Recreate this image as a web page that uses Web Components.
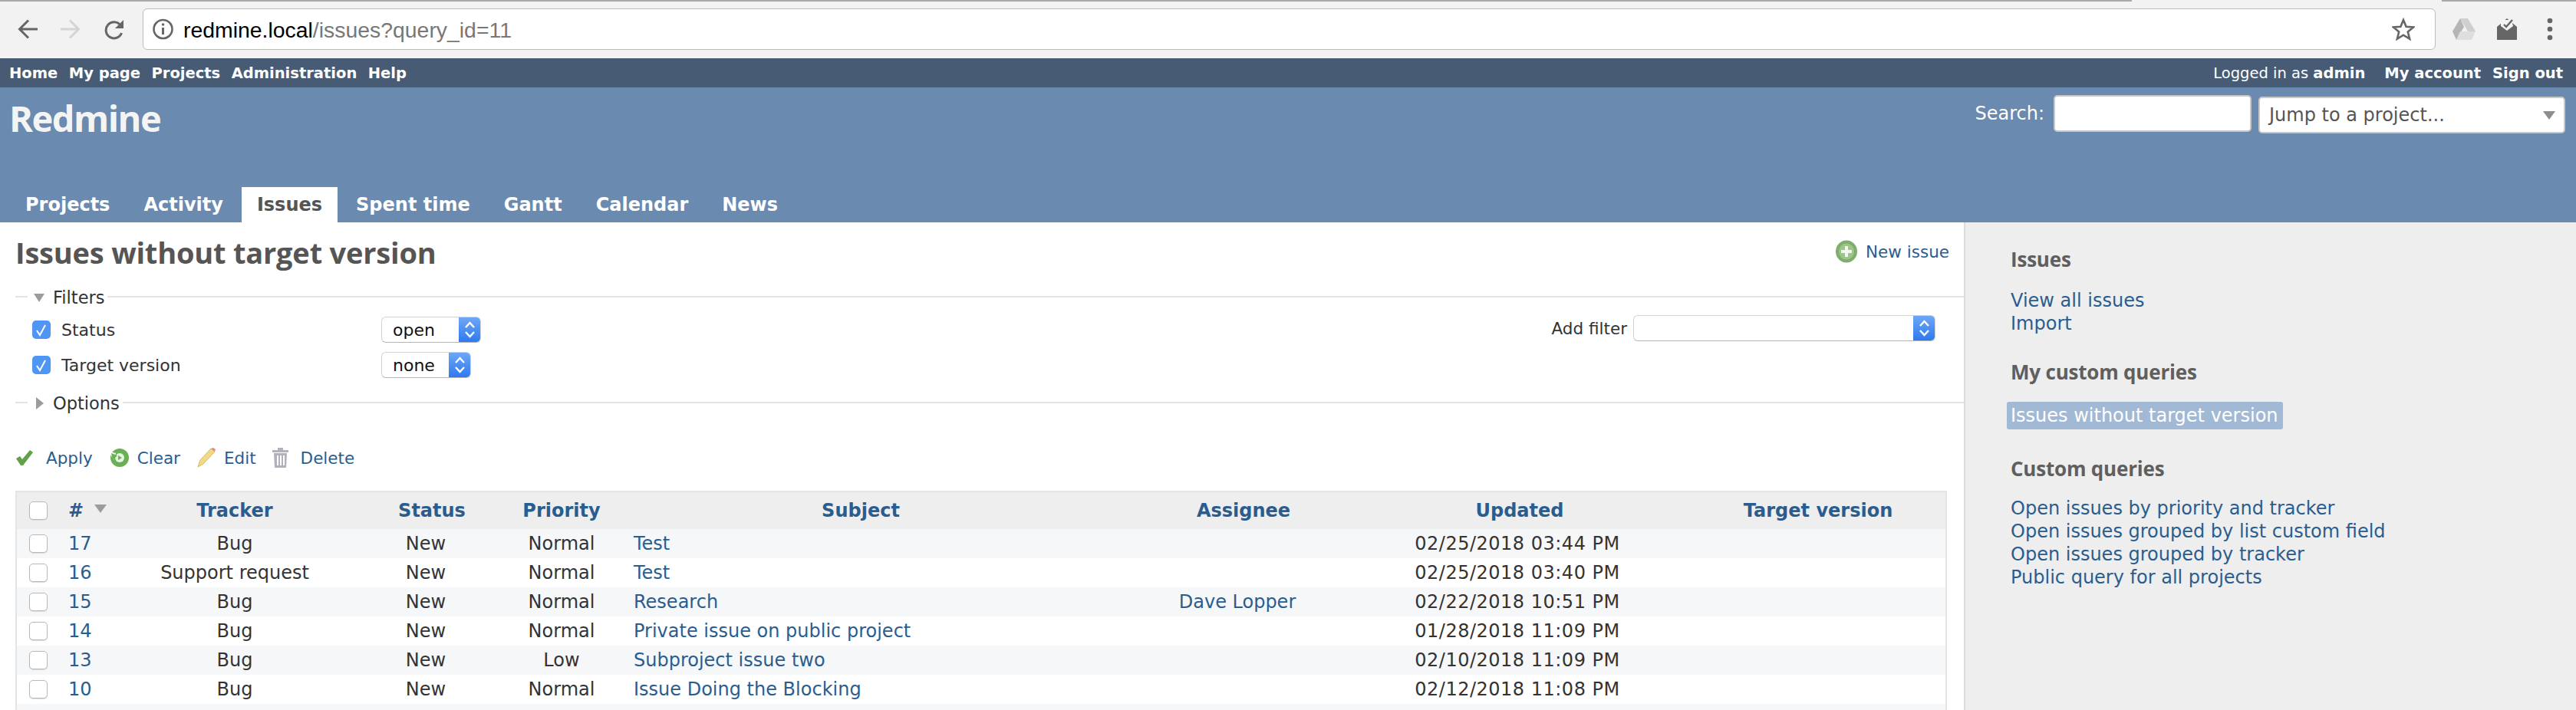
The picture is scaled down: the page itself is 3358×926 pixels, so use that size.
<!DOCTYPE html>
<html>
<head>
<meta charset="utf-8">
<title>Issues without target version</title>
<style>
  html, body { margin: 0; height: 926px; overflow: hidden; background: #fff; }
  body { font-family: "DejaVu Sans", Verdana, sans-serif; font-size: 24px; color: #333; }
  .app { display: flex; flex-direction: column; height: 926px; overflow: hidden; }
  .content { display: flex; flex: 1; min-height: 0; }
</style>
</head>
<body>
<div class="app">
  <browser-bar></browser-bar>
  <top-menu></top-menu>
  <site-header></site-header>
  <div class="content">
    <issues-main></issues-main>
    <issues-sidebar></issues-sidebar>
  </div>
</div>

<script>
const LINK = "#2a5d8f";

function defineElement(name, html) {
  const template = document.createElement("template");
  template.innerHTML = html;
  customElements.define(name, class extends HTMLElement {
    connectedCallback() {
      if (this.shadowRoot) return;
      this.attachShadow({ mode: "open" });
      this.shadowRoot.appendChild(template.content.cloneNode(true));
    }
  });
}

defineElement("browser-bar", `
  <style>
    :host { display: flex; align-items: center; height: 76px; box-sizing: border-box; background: #f2f2f2; padding: 11px 0 11px 23px; position: relative; }
    .strip { position: absolute; left: 0; right: 0; top: 0; height: 2px; display: flex; }
    .strip i { display: block; height: 2px; background: #a9a9a9; }
    .nav { display: flex; gap: 30px; align-items: center; width: 163px; }
    .nav svg { display: block; }
    .omni { flex: none; width: 2989px; height: 54px; box-sizing: border-box; border: 1px solid #bdbdbd; border-radius: 6px; background: #fff; display: flex; align-items: center; padding: 0 13px 0 12px; font: 28.400px "Liberation Sans", Arial, sans-serif; color: #777; }
    .omni b { font-weight: normal; color: #000; }
    .omni span { position: relative; top: 1px; }
    .omni svg { margin-right: 13px; }
    .star { margin-left: auto; }
    .ext { display: flex; align-items: center; margin-left: 21px; }
  </style>
  <div class="strip"><i style="width:2779px"></i><i style="width:404px;background:none"></i><i style="flex:1"></i></div>
  <div class="nav">
    <svg width="26" height="26" viewBox="0 0 26 26" fill="none" stroke="#666" stroke-width="3"><path d="M26 13H3M14 1.500L2.500 13 14 24.500"/></svg>
    <svg width="26" height="26" viewBox="0 0 26 26" fill="none" stroke="#d4d4d4" stroke-width="3"><path d="M0 13h23M12 1.500L23.500 13 12 24.500"/></svg>
    <svg width="27" height="27" viewBox="0 0 27 27" fill="none" stroke="#666" stroke-width="3"><path d="M23.500 18a10.500 10.500 0 1 1-1.500-10"/><path d="M26 1v11H15" fill="#666" stroke="none"/></svg>
  </div>
  <div class="omni">
    <svg width="27" height="28" viewBox="0 0 27 28" fill="none"><circle cx="13.500" cy="14" r="12" stroke="#666" stroke-width="2.600"/><path d="M13.500 12v9" stroke="#666" stroke-width="3"/><circle cx="13.500" cy="8" r="1.800" fill="#666"/></svg>
    <span><b>redmine.local</b>/issues?query_id=11</span>
    <svg class="star" width="30" height="30" viewBox="0 0 30 30" fill="none" stroke="#666" stroke-width="2.600"><path d="M15 3l3.600 8.800 9.400.7-7.200 6 2.300 9.200-8.100-5-8.100 5 2.300-9.200-7.200-6 9.400-.7z"/></svg>
  </div>
  <div class="ext">
    <svg style="margin-right:26px" width="32" height="30" viewBox="0 0 32 30"><path d="M11 1h10l10 17H21z" fill="#cfcfcf"/><path d="M11 1L1 18l5 11 10-17z" fill="#b5b5b5"/><path d="M6 29h20l5-11H11z" fill="#dedede"/></svg>
    <svg style="margin-right:38px" width="28" height="30" viewBox="0 0 28 30"><path d="M1 12L14 1l13 11v17H1z" fill="#666"/><path d="M6 3h14l2 8-8 6-8-6z" fill="#f2f2f2"/><path d="M10 9l3 3 8-9" fill="none" stroke="#666" stroke-width="2.400"/></svg>
    <svg width="8" height="30" viewBox="0 0 8 30" fill="#666"><circle cx="4" cy="4" r="3.300"/><circle cx="4" cy="15" r="3.300"/><circle cx="4" cy="26" r="3.300"/></svg>
  </div>
`);

defineElement("top-menu", `
  <style>
    :host { display: flex; justify-content: space-between; align-items: center; height: 38px; box-sizing: border-box; background: #475b74; color: #fff; padding: 0 17px 0 12px; font: bold 19.500px "DejaVu Sans", Verdana, sans-serif; }
    nav { display: flex; gap: 14.500px; }
    .right { display: flex; align-items: center; gap: 15px; }
    .who { font-weight: normal; margin-right: 10px; }
    b { font-weight: bold; }
  </style>
  <nav><span>Home</span><span>My page</span><span>Projects</span><span>Administration</span><span>Help</span></nav>
  <div class="right"><span class="who">Logged in as <b>admin</b></span><span>My account</span><span>Sign out</span></div>
`);

defineElement("site-header", `
  <style>
    :host { display: block; height: 176px; box-sizing: border-box; background: #6a8ab0; color: #fff; position: relative; }
    .row { display: flex; justify-content: space-between; height: 130px; box-sizing: border-box; padding: 10px 14px 0 12px; }
    h1 { margin: 2px 0 0; font: 700 47px/1.2 "Open Sans", sans-serif; letter-spacing: -1.500px; color: #f4f4f4; }
    .quick { display: flex; align-items: flex-start; padding-top: 0; }
    label { line-height: 48px; margin-right: 12px; }
    .search { width: 258px; height: 48px; box-sizing: border-box; background: #fff; border: 2px solid #c8c8c8; border-radius: 5px; margin-right: 9px; }
    .jump { width: 400px; height: 48px; margin-top: 2px; box-sizing: border-box; background: #fff; border: 2px solid #c8c8c8; border-radius: 5px; color: #555; line-height: 44px; padding-left: 12px; position: relative; }
    .jump i { position: absolute; right: 11px; top: 17px; width: 0; height: 0; border: 8px solid transparent; border-top: 11px solid #8d8d8d; border-bottom: 0; }
    nav { display: flex; gap: 4px; padding-left: 13px; height: 46px; }
    nav span { padding: 0 20px; font-weight: bold; line-height: 46px; }
    nav .on { background: #fff; color: #555; }
  </style>
  <div class="row">
    <h1>Redmine</h1>
    <div class="quick">
      <label>Search:</label>
      <div class="search"></div>
      <div class="jump">Jump to a project...<i></i></div>
    </div>
  </div>
  <nav><span>Projects</span><span>Activity</span><span class="on">Issues</span><span>Spent time</span><span>Gantt</span><span>Calendar</span><span>News</span></nav>
`);

defineElement("aqua-select", `
  <style>
    :host { display: inline-flex; height: 34px; box-sizing: border-box; border: 1px solid #d2d2d2; border-bottom: 1px solid #b5b5b5; border-radius: 6px; background: #fff; color: #111; align-items: center; overflow: hidden; }
    .text { flex: 1; padding-left: 14px; font-size: 22px; }
    .btn { flex: none; width: 29px; align-self: stretch; margin: -1px; background: linear-gradient(#6fa8f5, #2d78f0); display: flex; align-items: center; justify-content: center; }
  </style>
  <span class="text"><slot></slot></span>
  <span class="btn"><svg width="15" height="26" viewBox="0 0 15 26" fill="none" stroke="#fff" stroke-width="2.400"><path d="M2 10l5.500-6 5.500 6M2 16l5.500 6 5.500-6"/></svg></span>
`);

defineElement("blue-check", `
  <style>
    :host { display: inline-block; flex: none; width: 24px; height: 24px; box-sizing: border-box; border-radius: 5px; background: #4f95f4; }
    svg { display: block; }
  </style>
  <svg width="24" height="24" viewBox="0 0 24 24" fill="none" stroke="#fff" stroke-width="2"><path d="M6 13l4 6 7-13"/></svg>
`);

defineElement("filter-legend", `
  <style>
    :host { display: flex; align-items: center; height: 30px; color: #333; }
    .l1 { width: 16px; height: 2px; background: #e4e4e4; margin-left: 20px; }
    .label { display: flex; align-items: center; padding: 2px 4px 0 7px; }
    .arrow { width: 26px; display: flex; }
    .l2 { flex: 1; height: 2px; background: #e4e4e4; }
    span.txt { font-size: 22.500px; }
  </style>
  <i class="l1"></i>
  <span class="label"><span class="arrow"><slot name="arrow"></slot></span><span class="txt"><slot></slot></span></span>
  <i class="l2"></i>
`);

defineElement("query-filters", `
  <style>
    :host { display: block; font-size: 22px; }
    .filters { display: flex; justify-content: space-between; height: 108px; }
    .rows { padding: 11px 0 0 42px; display: flex; flex-direction: column; gap: 12px; }
    .row { display: flex; align-items: center; height: 34px; }
    .row label { width: 431px; padding-left: 14px; box-sizing: border-box; }
    .add { display: flex; align-items: center; gap: 8px; height: 34px; margin: 9px 37px 0 0; font-size: 21.500px; }
  </style>
  <filter-legend><svg slot="arrow" width="16" height="14" viewBox="0 0 16 14"><path d="M1 2h14l-7 11z" fill="#9c9c9c"/></svg>Filters</filter-legend>
  <div class="filters">
    <div class="rows">
      <div class="row"><blue-check></blue-check><label>Status</label><aqua-select style="width:130px">open</aqua-select></div>
      <div class="row"><blue-check></blue-check><label>Target version</label><aqua-select style="width:117px">none</aqua-select></div>
    </div>
    <div class="add"><span>Add filter</span><aqua-select style="width:394px"></aqua-select></div>
  </div>
  <filter-legend><svg slot="arrow" width="16" height="18" viewBox="0 0 16 18"><path d="M4 1l10 8-10 8z" fill="#9c9c9c"/></svg>Options</filter-legend>
`);

defineElement("query-actions", `
  <style>
    :host { display: flex; align-items: center; height: 30px; padding-left: 20px; color: ${LINK}; font-size: 21.500px; }
    span { display: flex; align-items: center; }
    svg { flex: none; }
  </style>
  <span style="margin-right:21px"><svg width="24" height="22" viewBox="0 0 24 22" style="margin-right:16px"><path d="M1 12l5-3 3 4L19 1l4 3L10 21H7z" fill="#62a04c"/></svg>Apply</span>
  <span style="margin-right:20px"><svg width="26" height="28" viewBox="0 0 26 28" style="margin-right:11px" fill="none"><circle cx="14" cy="14" r="12" fill="#6aae55"/><circle cx="14" cy="14" r="6" fill="#e9f3e3"/><path d="M0 6l9 2-3 9z" fill="#fff"/><path d="M3 8l8 3-6 6z" fill="#6aae55"/><path d="M12 11l5 3-5 3z" fill="#6aae55"/></svg>Clear</span>
  <span style="margin-right:20px"><svg width="27" height="28" viewBox="0 0 27 28" style="margin-right:10px"><path d="M3 26l3-9L20 2l5 4L10 22z" fill="#f1d98a" stroke="#d8b85c"/><path d="M20 2l5 4 1-3-3-2z" fill="#e58a8a"/></svg>Edit</span>
  <span><svg width="23" height="28" viewBox="0 0 23 28" style="margin-right:15px" fill="#b0b0be"><path d="M8 1h7v3h7v3H1V4h7z"/><path d="M3 8h17l-1 19H4zM7 11v13h2V11zM11 11v13h2V11zM15 11v13h2V11z" fill-rule="evenodd"/></svg>Delete</span>
`);

const issues = [
  [17, "Bug", "Normal", "Test", "", "02/25/2018 03:44 PM"],
  [16, "Support request", "Normal", "Test", "", "02/25/2018 03:40 PM"],
  [15, "Bug", "Normal", "Research", "Dave Lopper", "02/22/2018 10:51 PM"],
  [14, "Bug", "Normal", "Private issue on public project", "", "01/28/2018 11:09 PM"],
  [13, "Bug", "Low", "Subproject issue two", "", "02/10/2018 11:09 PM"],
  [10, "Bug", "Normal", "Issue Doing the Blocking", "", "02/12/2018 11:08 PM"]
];

const issueTableTemplate = document.createElement("template");
issueTableTemplate.innerHTML = `
  <style>
    :host { display: block; margin-left: 20px; width: 2518px; border-left: 2px solid #e4e4e4; border-top: 2px solid #e4e4e4; border-right: 2px solid #e4e4e4; box-sizing: border-box; }
    table { border-collapse: collapse; table-layout: fixed; width: 100%; font-size: 24px; }
    th { height: 48px; padding: 0; background: #eee; color: ${LINK}; font-weight: bold; }
    td { height: 38px; padding: 0; text-align: center; white-space: nowrap; }
    tbody tr:nth-child(odd) td { background: #f6f7f8; }
    .box { display: block; width: 24px; height: 24px; box-sizing: border-box; margin-left: 16px; background: #fff; border: 1px solid #b8b8b8; border-radius: 5px; box-shadow: 0 1px 1px #ddd; }
    .id { text-align: left; padding-left: 19px; }
    .id, .subject, .assignee { color: ${LINK}; }
    td.subject { text-align: left; padding-left: 36px; }
    th.subject { padding-right: 30px; }
    td.status, td.assignee { padding-right: 16px; }
    td.date { padding-right: 6px; letter-spacing: .5px; }
    .sort { display: inline-block; width: 0; height: 0; border: 8px solid transparent; border-top: 11px solid #9c9c9c; border-bottom: 0; margin-left: 14px; vertical-align: 5px; }
    tr.cut td { height: 8px; }
  </style>
  <table>
    <colgroup>
      <col style="width:48px"><col style="width:90px"><col style="width:292px"><col style="width:222px">
      <col style="width:116px"><col style="width:694px"><col style="width:274px"><col style="width:446px"><col>
    </colgroup>
    <thead><tr>
      <th><span class="box"></span></th>
      <th class="id">#<i class="sort"></i></th>
      <th>Tracker</th><th>Status</th><th>Priority</th><th class="subject">Subject</th><th>Assignee</th><th>Updated</th><th>Target version</th>
    </tr></thead>
    <tbody></tbody>
  </table>
`;

class IssueTable extends HTMLElement {
  connectedCallback() {
    this.attachShadow({ mode: "open" });
    this.shadowRoot.appendChild(issueTableTemplate.content.cloneNode(true));
    this.$body = this.shadowRoot.querySelector("tbody");
    this.render();
  }

  render() {
    this.$body.innerHTML = issues.map(i => `
      <tr>
        <td><span class="box"></span></td>
        <td class="id">${i[0]}</td>
        <td>${i[1]}</td><td class="status">New</td><td>${i[2]}</td>
        <td class="subject">${i[3]}</td>
        <td class="assignee">${i[4]}</td>
        <td class="date">${i[5]}</td><td></td>
      </tr>`).join("") + `<tr class="cut"><td colspan="9"></td></tr>`;
  }
}
customElements.define("issue-table", IssueTable);

defineElement("issues-main", `
  <style>
    :host { display: block; flex: none; width: 2560px; box-sizing: border-box; overflow: hidden; }
    .head { display: flex; justify-content: space-between; align-items: center; height: 82px; padding: 0 19px 0 20px; }
    h2 { margin: -4px 0 0; font: 700 38px "Open Sans", sans-serif; letter-spacing: -0.200px; color: #555; }
    .new { display: flex; align-items: center; color: ${LINK}; font-size: 21.500px; margin-top: -6px; }
    .new svg { margin-right: 11px; }
    query-filters { margin-bottom: 42px; }
    query-actions { margin-bottom: 28px; }
  </style>
  <div class="head">
    <h2>Issues without target version</h2>
    <span class="new"><svg width="28" height="30" viewBox="0 0 28 30"><ellipse cx="14" cy="15" rx="14" ry="14.500" fill="#7fae6c"/><ellipse cx="14" cy="15" rx="10" ry="10.500" fill="#9cc48b"/><path d="M12 8h4v5h5v4h-5v5h-4v-5H7v-4h5z" fill="#f2f7ef"/></svg>New issue</span>
  </div>
  <query-filters></query-filters>
  <query-actions></query-actions>
  <issue-table></issue-table>
`);

defineElement("issues-sidebar", `
  <style>
    :host { display: block; flex: 1; background: #eee; border-left: 2px solid #dcdcdc; box-sizing: border-box; padding: 30px 0 0 59px; font-size: 24px; color: ${LINK}; }
    h3 { margin: 0 0 21px; font: 700 26px/36px "Open Sans", sans-serif; letter-spacing: -0.200px; color: #5f5f5f; }
    .links { margin-bottom: 30px; }
    .links div { height: 30px; line-height: 30px; }
    .links .sel { width: fit-content; margin-left: -5px; padding: 0 6px 0 5px; height: 36px; line-height: 36px; background: #a2b9d5; color: #fff; border-radius: 3px; }
  </style>
  <h3>Issues</h3>
  <div class="links"><div>View all issues</div><div>Import</div></div>
  <h3>My custom queries</h3>
  <div class="links" style="margin-bottom:33px"><div class="sel">Issues without target version</div></div>
  <h3 style="margin-bottom:19px">Custom queries</h3>
  <div class="links"><div>Open issues by priority and tracker</div><div>Open issues grouped by list custom field</div><div>Open issues grouped by tracker</div><div>Public query for all projects</div></div>
`);
</script>
</body>
</html>
